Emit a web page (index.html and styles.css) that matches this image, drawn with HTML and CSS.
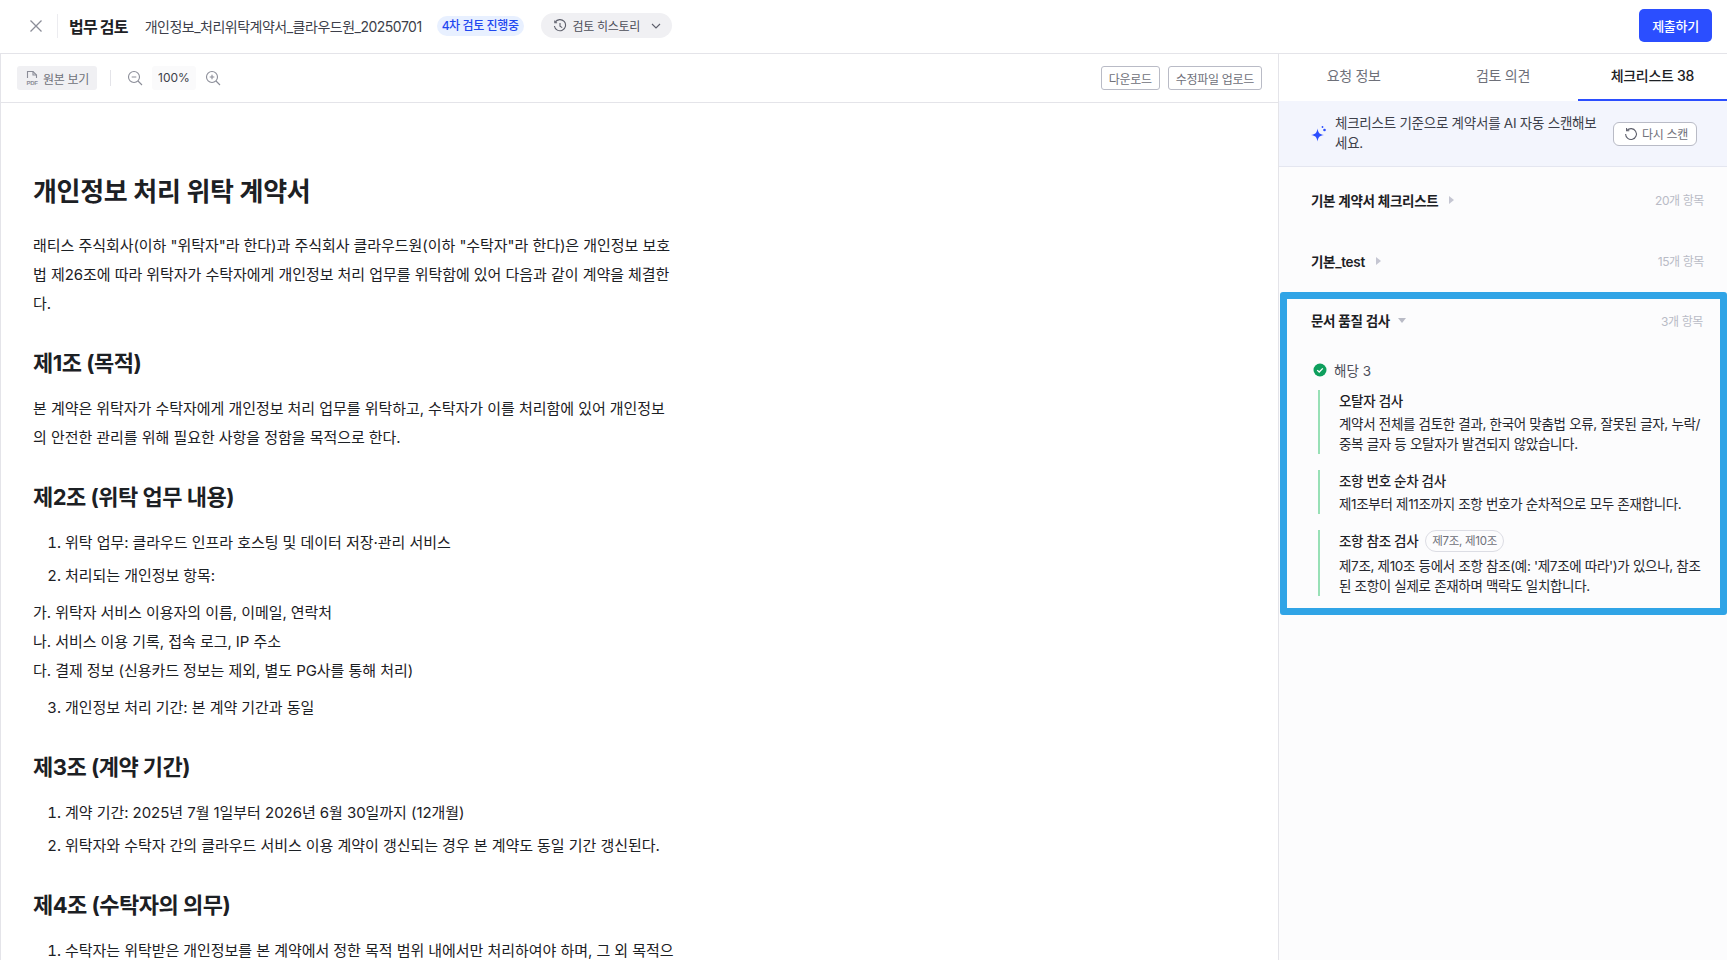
FILE: index.html
```html
<!DOCTYPE html>
<html lang="ko">
<head>
    <meta charset="UTF-8">
    <meta name="viewport" content="width=device-width, initial-scale=1.0">
    <title>법무 검토</title>
    <link rel="stylesheet" href="styles.css">
</head>
<body>
    <header class="top-bar">
        <button class="close-btn" aria-label="닫기">
            <svg width="14" height="14" viewBox="0 0 14 14" fill="none">
                <path d="M1.5 1.5L12.5 12.5M12.5 1.5L1.5 12.5" stroke="#8b8d98" stroke-width="1.3"/>
            </svg>
        </button>
        <div class="top-title">법무 검토</div>
        <div class="top-file">개인정보_처리위탁계약서_클라우드원_20250701</div>
        <div class="status-pill">4차 검토 진행중</div>
        <button class="history-btn">
            <svg width="14" height="14" viewBox="0 0 14 14" fill="none">
                <path d="M2.2 3.2A5.6 5.6 0 1 1 1.4 7" stroke="#5d5f6b" stroke-width="1.1"/>
                <path d="M1.8 1.4V3.7H4.1" stroke="#5d5f6b" stroke-width="1.1"/>
                <path d="M7 4V7.3L9.2 8.6" stroke="#5d5f6b" stroke-width="1.1"/>
            </svg>
            <span>검토 히스토리</span>
            <svg class="history-caret" width="10" height="6" viewBox="0 0 10 6" fill="none">
                <path d="M1 1L5 5L9 1" stroke="#5d5f6b" stroke-width="1.1"/>
            </svg>
        </button>
        <button class="submit-btn">제출하기</button>
    </header>

    <div class="workspace">
        <main class="doc-pane">
            <div class="doc-toolbar">
                <button class="source-btn">
                    <svg width="14" height="16" viewBox="0 0 14 16" fill="none">
                        <path d="M2.5 8V1.5H8L11.5 5V8" stroke="#8b8d98" stroke-width="1.1"/>
                        <path d="M8 1.5V5H11.5" stroke="#8b8d98" stroke-width="1.1"/>
                        <text class="pdf-mark" x="7" y="15">PDF</text>
                    </svg>
                    <span>원본 보기</span>
                </button>
                <span class="toolbar-sep"></span>
                <svg class="zoom-icon" width="16" height="16" viewBox="0 0 16 16" fill="none">
                    <circle cx="7" cy="7" r="5.5" stroke="#8b8d98" stroke-width="1.1"/>
                    <path d="M11 11L15 15M4.7 7H9.3" stroke="#8b8d98" stroke-width="1.1"/>
                </svg>
                <span class="zoom-value">100%</span>
                <svg class="zoom-icon" width="16" height="16" viewBox="0 0 16 16" fill="none">
                    <circle cx="7" cy="7" r="5.5" stroke="#8b8d98" stroke-width="1.1"/>
                    <path d="M11 11L15 15M4.7 7H9.3M7 4.7V9.3" stroke="#8b8d98" stroke-width="1.1"/>
                </svg>
                <div class="toolbar-actions">
                    <button class="outline-btn">다운로드</button>
                    <button class="outline-btn">수정파일 업로드</button>
                </div>
            </div>

            <article class="doc-body">
                <h1>개인정보 처리 위탁 계약서</h1>
                <p>래티스 주식회사(이하 "위탁자"라 한다)과 주식회사 클라우드원(이하 "수탁자"라 한다)은 개인정보 보호법 제26조에 따라 위탁자가 수탁자에게 개인정보 처리 업무를 위탁함에 있어 다음과 같이 계약을 체결한다.</p>

                <h2>제1조 (목적)</h2>
                <p>본 계약은 위탁자가 수탁자에게 개인정보 처리 업무를 위탁하고, 수탁자가 이를 처리함에 있어 개인정보의 안전한 관리를 위해 필요한 사항을 정함을 목적으로 한다.</p>

                <h2>제2조 (위탁 업무 내용)</h2>
                <ol>
                    <li>위탁 업무: 클라우드 인프라 호스팅 및 데이터 저장·관리 서비스</li>
                    <li>처리되는 개인정보 항목:</li>
                </ol>
                <p class="sub-list">가. 위탁자 서비스 이용자의 이름, 이메일, 연락처<br>나. 서비스 이용 기록, 접속 로그, IP 주소<br>다. 결제 정보 (신용카드 정보는 제외, 별도 PG사를 통해 처리)</p>
                <ol start="3">
                    <li>개인정보 처리 기간: 본 계약 기간과 동일</li>
                </ol>

                <h2>제3조 (계약 기간)</h2>
                <ol>
                    <li>계약 기간: 2025년 7월 1일부터 2026년 6월 30일까지 (12개월)</li>
                    <li>위탁자와 수탁자 간의 클라우드 서비스 이용 계약이 갱신되는 경우 본 계약도 동일 기간 갱신된다.</li>
                </ol>

                <h2>제4조 (수탁자의 의무)</h2>
                <ol>
                    <li>수탁자는 위탁받은 개인정보를 본 계약에서 정한 목적 범위 내에서만 처리하여야 하며, 그 외 목적으로 이용하거나 제3자에게 제공하여서는 안 된다.</li>
                </ol>
            </article>
        </main>

        <aside class="side-pane">
            <nav class="tabs">
                <div class="tab">요청 정보</div>
                <div class="tab">검토 의견</div>
                <div class="tab tab-active">체크리스트 38</div>
            </nav>

            <div class="scan-banner">
                <svg class="scan-icon" width="16" height="18" viewBox="0 0 16 18" fill="none">
                    <path d="M6.5 3.5C7.2 8 8.5 9.3 13 10C8.5 10.7 7.2 12 6.5 16.5C5.8 12 4.5 10.7 0 10C4.5 9.3 5.8 8 6.5 3.5Z" fill="#2b4eff"/>
                    <circle cx="13.5" cy="5" r="1.3" fill="#2b4eff"/>
                    <circle cx="11.5" cy="2" r="0.9" fill="#2b4eff"/>
                </svg>
                <div class="scan-text">체크리스트 기준으로 계약서를 AI 자동 스캔해보세요.</div>
                <button class="rescan-btn">
                    <svg width="14" height="14" viewBox="0 0 14 14" fill="none">
                        <path d="M3 3.4A5.4 5.4 0 1 1 1.6 7" stroke="#5d5f6b" stroke-width="1.1"/>
                        <path d="M2.6 1V3.7H5.3" stroke="#5d5f6b" stroke-width="1.1"/>
                    </svg>
                    <span>다시 스캔</span>
                </button>
            </div>

            <div class="plain-groups">
                <section class="check-group">
                    <div class="group-head">
                        <span class="group-name">기본 계약서 체크리스트</span>
                        <span class="caret-right"></span>
                        <span class="group-count">20개 항목</span>
                    </div>
                </section>
                <section class="check-group">
                    <div class="group-head">
                        <span class="group-name">기본_test</span>
                        <span class="caret-right"></span>
                        <span class="group-count">15개 항목</span>
                    </div>
                </section>
            </div>

            <section class="check-group highlight">
                <div class="group-head">
                    <span class="group-name">문서 품질 검사</span>
                    <span class="caret-down"></span>
                    <span class="group-count">3개 항목</span>
                </div>
                <div class="result-label">
                    <svg width="14" height="14" viewBox="0 0 14 14" fill="none">
                        <circle cx="7" cy="7" r="6.5" fill="#0e9f5d"/>
                        <path d="M4.2 7.1L6.2 9L9.8 5.4" stroke="#fff" stroke-width="1.3"/>
                    </svg>
                    <span>해당 3</span>
                </div>
                <div class="result-item">
                    <div class="result-title">오탈자 검사</div>
                    <div class="result-desc">계약서 전체를 검토한 결과, 한국어 맞춤법 오류, 잘못된 글자, 누락/중복 글자 등 오탈자가 발견되지 않았습니다.</div>
                </div>
                <div class="result-item">
                    <div class="result-title">조항 번호 순차 검사</div>
                    <div class="result-desc">제1조부터 제11조까지 조항 번호가 순차적으로 모두 존재합니다.</div>
                </div>
                <div class="result-item">
                    <div class="result-title result-title-chip">조항 참조 검사<span class="ref-chip">제7조, 제10조</span></div>
                    <div class="result-desc">제7조, 제10조 등에서 조항 참조(예: '제7조에 따라')가 있으나, 참조된 조항이 실제로 존재하며 맥락도 일치합니다.</div>
                </div>
            </section>
        </aside>
    </div>
</body>
</html>
```

FILE: styles.css
```css
* {
    margin: 0;
    padding: 0;
    box-sizing: border-box;
}

html, body {
    height: 100%;
}

body {
    font-family: Inter, "Noto Sans CJK KR", sans-serif;
    color: #1c2024;
    background: #ffffff;
    overflow: hidden;
}

button {
    font-family: inherit;
    cursor: pointer;
    background: none;
    border: none;
}

.top-bar {
    display: flex;
    align-items: center;
    height: 54px;
    padding: 0 15px 2px 29px;
    border-bottom: 1px solid #e4e4e9;
}

.close-btn {
    display: flex;
    padding-right: 14px;
    height: 24px;
    align-items: center;
    border-right: 1px solid #ececf0;
}

.top-title {
    margin-left: 11px;
    font-size: 16px;
    font-weight: 700;
    letter-spacing: -0.8px;
}

.top-file {
    margin-left: 17px;
    font-size: 14px;
    color: #3d3f4a;
    letter-spacing: -0.5px;
}

.status-pill {
    margin-left: 15px;
    padding: 3px 5px;
    font-size: 12px;
    font-weight: 500;
    line-height: 14px;
    color: #1f47f0;
    background: #e8f0ff;
    border-radius: 10px;
    letter-spacing: -0.4px;
}

.history-btn {
    display: flex;
    align-items: center;
    gap: 6px;
    margin-left: 17px;
    height: 25px;
    padding: 0 11px 0 12px;
    font-size: 12px;
    color: #4c4e59;
    background: #f0f0f3;
    border-radius: 13px;
    letter-spacing: -0.3px;
}

.history-caret {
    margin-left: 5px;
}

.submit-btn {
    margin-left: auto;
    height: 33px;
    width: 73px;
    font-size: 13px;
    font-weight: 500;
    color: #ffffff;
    background: #2b4eff;
    border-radius: 5px;
    letter-spacing: -0.3px;
}

.workspace {
    display: flex;
    height: 906px;
}

.doc-pane {
    flex: 1;
    min-width: 0;
    border-left: 1px solid #e4e4e9;
}

.doc-toolbar {
    display: flex;
    align-items: center;
    height: 49px;
    padding: 0 16px;
    border-bottom: 1px solid #e4e4e9;
}

.source-btn {
    display: flex;
    align-items: center;
    gap: 4px;
    height: 24px;
    width: 80px;
    justify-content: center;
    font-size: 12px;
    color: #6e7079;
    background: #f0f0f3;
    border-radius: 3px;
    letter-spacing: -0.3px;
}

.pdf-mark {
    font-family: "Liberation Sans", sans-serif;
    font-size: 6px;
    font-weight: 700;
    text-anchor: middle;
    fill: #8b8d98;
}

.toolbar-sep {
    width: 1px;
    height: 16px;
    margin: 0 16px 0 13px;
    background: #e4e4e9;
}

.zoom-value {
    width: 44px;
    height: 24px;
    margin: 0 9px;
    font-size: 12px;
    line-height: 24px;
    text-align: center;
    color: #3d3f4a;
    background: #fafafb;
    border-radius: 3px;
}

.toolbar-actions {
    display: flex;
    gap: 8px;
    margin-left: auto;
}

.outline-btn {
    height: 24px;
    padding: 0 7px;
    font-size: 12px;
    color: #6e7079;
    background: #ffffff;
    border: 1px solid #b9bbc6;
    border-radius: 3px;
    letter-spacing: -0.3px;
}

.doc-body {
    width: 674px;
    padding: 71px 0 0 32px;
    font-size: 15px;
    line-height: 29px;
    color: #1c2024;
    letter-spacing: -0.05px;
}

.doc-body h1 {
    font-size: 26px;
    font-weight: 700;
    line-height: 36px;
    letter-spacing: -0.3px;
    margin-bottom: 21px;
}

.doc-body h2 {
    font-size: 22px;
    font-weight: 700;
    line-height: 30px;
    letter-spacing: -0.5px;
    margin: 30px 0 16px;
}

.doc-body ol {
    padding-left: 32px;
}

.doc-body li {
    margin-bottom: 4px;
}

.sub-list {
    margin: 8px 0;
}

.side-pane {
    width: 449px;
    flex-shrink: 0;
    background: #fcfcfd;
    border-left: 1px solid #e4e4e9;
}

.tabs {
    display: flex;
    height: 47px;
    background: #ffffff;
}

.tab {
    flex: 1;
    font-size: 14px;
    line-height: 44px;
    text-align: center;
    color: #6e7079;
    letter-spacing: -0.3px;
}

.tab-active {
    color: #1c2024;
    font-weight: 500;
    border-bottom: 2px solid #2b4eff;
}

.scan-banner {
    display: flex;
    align-items: center;
    height: 66px;
    padding: 0 30px 0 32px;
    background: #f3f5fd;
    border-bottom: 1px solid #e4e6f0;
}

.scan-icon {
    flex-shrink: 0;
}

.scan-text {
    width: 262px;
    margin-left: 8px;
    padding-bottom: 2px;
    font-size: 13.5px;
    line-height: 20px;
    color: #3d3f4a;
    letter-spacing: -0.25px;
}

.rescan-btn {
    display: flex;
    align-items: center;
    gap: 4px;
    height: 24px;
    margin-left: auto;
    padding: 0 8px 0 10px;
    font-size: 12px;
    color: #6e7079;
    background: #ffffff;
    border: 1px solid #b9bbc6;
    border-radius: 6px;
    letter-spacing: -0.3px;
}

.plain-groups {
    padding: 2px 0 1px;
}

.check-group {
    padding: 0 23px 0 32px;
}

.group-head {
    display: flex;
    align-items: center;
    height: 61px;
}

.group-name {
    font-size: 13.5px;
    font-weight: 600;
    color: #1c2024;
    letter-spacing: -0.3px;
}

.caret-right {
    width: 0;
    height: 0;
    margin-left: 11px;
    border-top: 4px solid transparent;
    border-bottom: 4px solid transparent;
    border-left: 5px solid #c5c6d2;
}

.caret-down {
    width: 0;
    height: 0;
    margin-left: 8px;
    border-left: 4.5px solid transparent;
    border-right: 4.5px solid transparent;
    border-top: 5px solid #b9bbc6;
}

.group-count {
    margin-left: auto;
    font-size: 12px;
    color: #b9bbc6;
    letter-spacing: -0.4px;
}

.highlight {
    margin-left: 1px;
    padding: 0 17px 12px 24px;
    border: 7px solid #30a4e6;
    border-radius: 3px;
}

.highlight .group-head {
    height: 42px;
}

.result-label {
    display: flex;
    align-items: center;
    gap: 7px;
    height: 24px;
    margin: 17px 0 8px;
    padding-left: 2px;
    font-size: 13.5px;
    color: #4c4e59;
}

.result-item {
    margin: 0 0 16px 7px;
    padding-left: 19px;
    border-left: 2px solid #98e0b6;
}

.result-item:last-child {
    margin-bottom: 0;
}

.result-title {
    font-size: 13.5px;
    font-weight: 500;
    line-height: 22px;
    color: #1c2024;
    letter-spacing: -0.3px;
}

.result-title-chip {
    display: flex;
    align-items: center;
    gap: 7px;
    height: 22px;
    margin-bottom: 4px;
}

.result-desc {
    margin-top: 2px;
    font-size: 13.5px;
    line-height: 20px;
    color: #26282f;
    letter-spacing: -0.32px;
}

.ref-chip {
    padding: 0 6px;
    font-size: 11.5px;
    font-weight: 400;
    line-height: 20px;
    color: #6e7079;
    border: 1px solid #dcdde4;
    border-radius: 11px;
}
```
